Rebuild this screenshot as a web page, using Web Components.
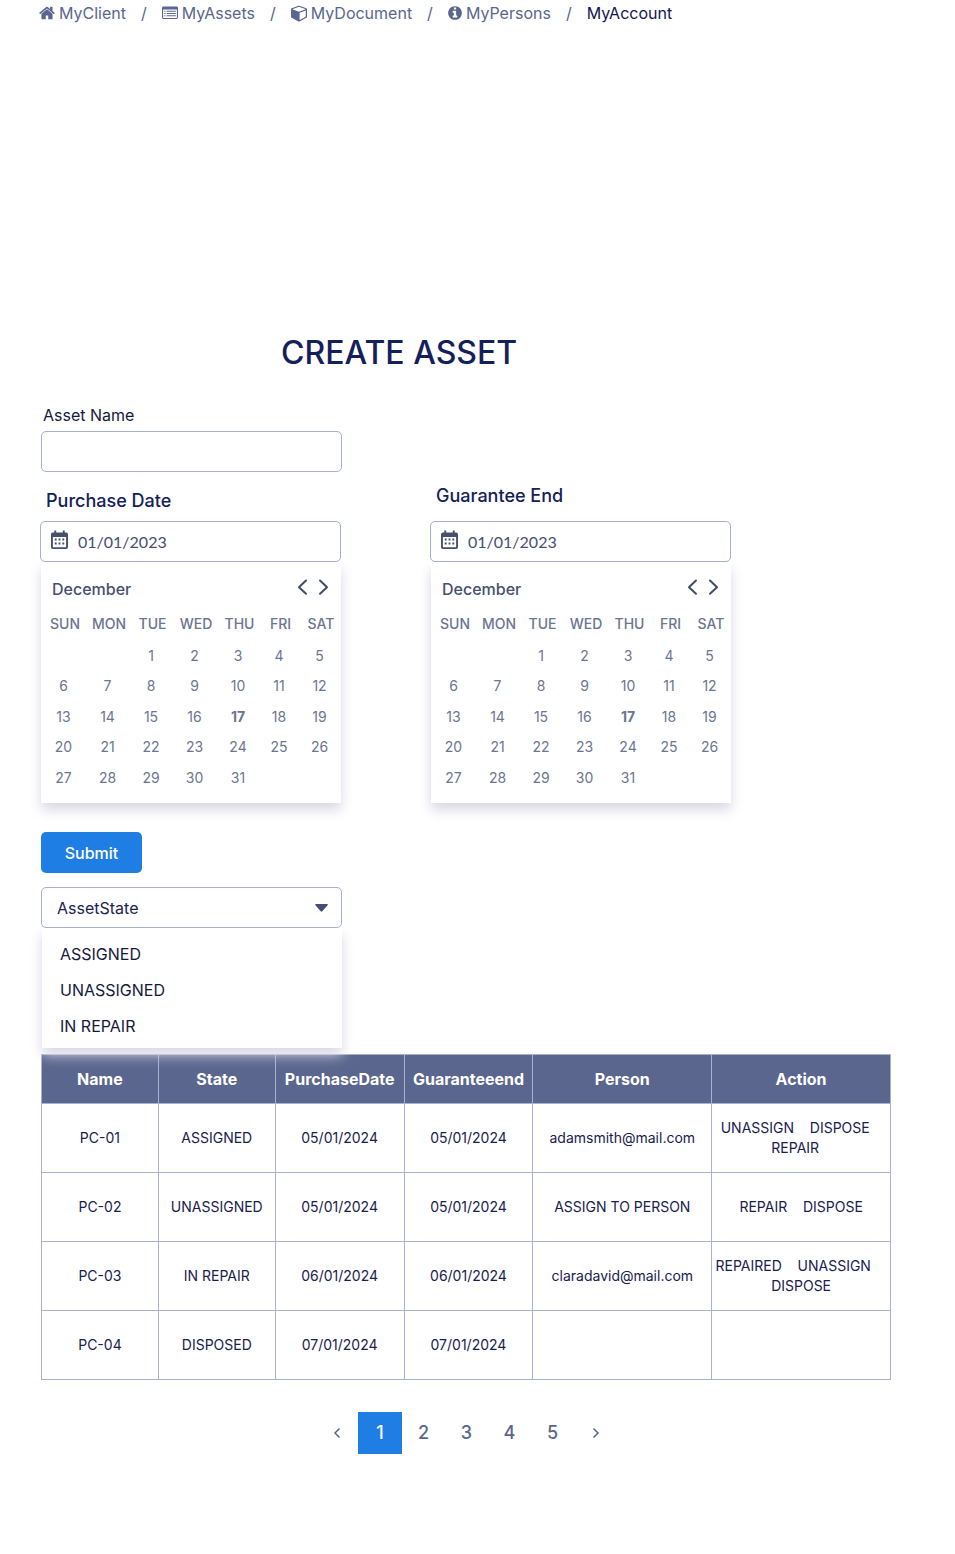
<!DOCTYPE html>
<html lang="en">
<head>
<meta charset="utf-8">
<meta name="viewport" content="width=device-width, initial-scale=1">
<title>Create Asset</title>
<style>
  body { margin: 0; background: #fff; color: #19204f; font: 16px/24px Inter, "Liberation Sans", sans-serif; }
</style>
</head>
<body>
<asset-page>
  <crumb-trail slot="nav">
    <crumb-link icon="home">MyClient</crumb-link>
    <crumb-link icon="list">MyAssets</crumb-link>
    <crumb-link icon="cube">MyDocument</crumb-link>
    <crumb-link icon="info">MyPersons</crumb-link>
    <crumb-link current>MyAccount</crumb-link>
  </crumb-trail>
  <span slot="title">CREATE ASSET</span>
  <text-field>Asset Name</text-field>
  <date-row>
    <date-field>Purchase Date</date-field>
    <date-field raised>Guarantee End</date-field>
  </date-row>
  <submit-button>Submit</submit-button>
  <state-select></state-select>
  <asset-table></asset-table>
  <page-nav></page-nav>
</asset-page>

<script>
const define = (name, html, setup) => {
  const template = document.createElement('template');
  template.innerHTML = html;
  customElements.define(name, class extends HTMLElement {
    connectedCallback() {
      if (this.shadowRoot) return;
      this.attachShadow({ mode: 'open' }).append(template.content.cloneNode(true));
      if (setup) setup(this, this.shadowRoot);
    }
  });
};

const icons = {
  home: `<svg width="16" height="18" viewBox="64 0 1664 1792"><path d="M1472 992v480q0 26-19 45t-45 19h-384v-384h-256v384h-384q-26 0-45-19t-19-45v-480q0-1 .5-3t.5-3l575-474 575 474q1 2 1 6zm223-69l-62 74q-8 9-21 11h-3q-13 0-21-7l-692-577-692 577q-12 8-24 7-13-2-21-11l-62-74q-8-10-7-23.5t11-21.5l719-599q32-26 76-26t76 26l244 204v-195q0-14 9-23t23-9h192q14 0 23 9t9 23v408l219 182q10 8 11 21.5t-7 23.5z"/></svg>`,
  list: `<svg width="16" height="16" viewBox="0 0 16 16"><path fill-rule="evenodd" d="M1.400 1.500h13.200A1.400 1.400 0 0 1 16 2.900v9.700a1.400 1.400 0 0 1-1.400 1.400H1.400A1.400 1.400 0 0 1 0 12.600V2.900a1.400 1.400 0 0 1 1.400-1.400zM1.100 4.500v8q0 .4.4.4h13q.4 0 .4-.4v-8zM2.300 5.700h1.200v1H2.300zM4.600 5.700h9.100v1H4.600zM2.300 8h1.200v1H2.300zM4.600 8h9.100v1H4.600zM2.300 10.300h1.200v1H2.300zM4.600 10.300h9.100v1H4.600z"/></svg>`,
  cube: `<svg width="16" height="18" viewBox="0 0 1664 1792"><path d="M896 1629l640-349v-636l-640 233v752zm-64-865l698-254-698-254-698 254zm832-252v768q0 35-18 65t-49 47l-704 384q-28 16-61 16t-61-16l-704-384q-31-17-49-47t-18-65v-768q0-40 23-73t61-47l704-256q22-8 44-8t44 8l704 256q38 14 61 47t23 73z"/></svg>`,
  info: `<svg width="14" height="16" viewBox="128 0 1536 1792"><path d="M1152 1376v-160q0-14-9-23t-23-9h-96v-512q0-14-9-23t-23-9h-320q-14 0-23 9t-9 23v160q0 14 9 23t23 9h96v320h-96q-14 0-23 9t-9 23v160q0 14 9 23t23 9h448q14 0 23-9t9-23zm-128-896v-160q0-14-9-23t-23-9h-192q-14 0-23 9t-9 23v160q0 14 9 23t23 9h192q14 0 23-9t9-23zm640 416q0 209-103 385.500t-279.500 279.500-385.500 103-385.500-103-279.500-279.500-103-385.500 103-385.500 279.500-279.500 385.500-103 385.500 103 279.500 279.500 103 385.500z"/></svg>`
};

define('asset-page', `
<style>
  :host { display: block; padding: 0 64px 100px 41px; }
  main { display: flex; flex-direction: column; }
  h1 { margin: 308px 0 30px; padding-left: 240px; font-size: 32px; line-height: 40px; font-weight: 500; color: #14205a; }
</style>
<slot name="nav"></slot>
<main><h1><slot name="title"></slot></h1><slot></slot></main>`);

define('crumb-trail', `
<style>
  :host { display: block; }
  nav { display: flex; flex-wrap: wrap; padding-top: 1px; margin-left: -2px; }
</style>
<nav aria-label="Breadcrumb"><slot></slot></nav>`);

define('crumb-link', `
<style>
  :host { display: flex; color: #5a668e; line-height: 24px; }
  a { display: flex; align-items: center; gap: 4px; color: inherit; text-decoration: none; }
  svg { fill: currentColor; flex: none; }
  :host([current]) a { color: #14164f; }
  .slash { padding: 0 15px; }
  :host([current]) .slash { display: none; }
</style>
<a href="#"><slot></slot></a><span class="slash">/</span>`, (host, root) => {
  const name = host.getAttribute('icon');
  if (name) root.querySelector('a').insertAdjacentHTML('afterbegin', icons[name]);
});

define('text-field', `
<style>
  :host { display: block; }
  label { display: block; padding: 0 2px; margin-bottom: 4px; color: #15193c; }
  input { display: block; box-sizing: border-box; width: 100%; max-width: 301px; height: 41px; padding: 0 12px; border: 1px solid #a5afcf; border-radius: 5px; font: inherit; color: inherit; }
</style>
<label for="name"><slot></slot></label><input id="name" type="text">`);

define('date-row', `
<style>
  :host { display: grid; grid-template-columns: repeat(2, minmax(0, 300px)); gap: 90px; align-items: end; margin: 12px 0 29px; }
</style>
<slot></slot>`);

define('date-field', `
<style>
  :host { display: block; }
  label { display: block; padding-left: 5px; margin-bottom: 8px; font-size: 18px; font-weight: 500; color: #14205a; }
  :host([raised]) label { margin-bottom: 13px; }
  .field { display: flex; align-items: center; gap: 10px; box-sizing: border-box; height: 41px; margin-left: -1px; padding: 0 10px; border: 1px solid #a5afcf; border-radius: 5px; background: #fff; position: relative; z-index: 1; }
  .field svg { flex: none; margin-bottom: 3px; }
  input { flex: 1; min-width: 0; padding: 0; border: 0; outline: 0; background: none; font: 16px/24px Lato, sans-serif; color: #474f70; }
  .panel { box-sizing: border-box; height: 241px; padding-top: 15px; background: #fff; box-shadow: 0 7px 12px #d9d7e6; }
  header { display: flex; align-items: center; padding: 0 12px 0 11px; color: #474f70; }
  h2 { flex: 1; margin: 0; font-size: 16px; line-height: 24px; font-weight: 500; }
  button { display: block; padding: 0; border: 0; background: none; height: 20px; margin-bottom: 4px; }
  button + button { margin-left: 10px; }
  button svg { display: block; fill: none; stroke: #414a70; stroke-width: 2; stroke-linecap: round; stroke-linejoin: round; }
  table { width: 100%; margin-top: 7px; table-layout: fixed; border-collapse: collapse; font-size: 14px; line-height: 20px; color: #6c7591; text-align: center; }
  th { height: 32px; padding: 0 0 0 3px; font-weight: 500; }
  td { height: 30px; padding: 0; }
  tr:nth-child(odd) td { height: 31px; }
</style>
<label for="date"><slot></slot></label>
<div class="field">
  <svg width="17" height="20" viewBox="0 0 18 20" preserveAspectRatio="none"><path fill="#474f70" fill-rule="evenodd" d="M3.500.5h2v2h7v-2h2v2H16a2 2 0 0 1 2 2V17a2 2 0 0 1-2 2H2a2 2 0 0 1-2-2V4.500a2 2 0 0 1 2-2h1.500zM2 7v9.700q0 .6.600.600h12.800q.6 0 .6-.600V7zM4 8.500h2v2H4zM8 8.500h2v2H8zM12 8.500h2v2h-2zM4 12.500h2v2H4zM8 12.500h2v2H8zM12 12.500h2v2h-2z"/></svg>
  <input id="date" type="text" value="01/01/2023">
</div>
<div class="panel">
  <header>
    <h2>December</h2>
    <button type="button" aria-label="Previous month"><svg width="11" height="20" viewBox="0 0 11 20"><path d="M9 3.500 2 10.300l7 6.500"/></svg></button>
    <button type="button" aria-label="Next month"><svg width="11" height="20" viewBox="0 0 11 20"><path d="m2 3.500 7 6.800-7 6.500"/></svg></button>
  </header>
  <table>
    <colgroup></colgroup>
    <thead><tr><th>SUN</th><th>MON</th><th>TUE</th><th>WED</th><th>THU</th><th>FRI</th><th>SAT</th></tr></thead>
    <tbody></tbody>
  </table>
</div>`, (host, root) => {
  root.querySelector('colgroup').innerHTML = [45, 43, 44, 43, 44, 38, 43].map(w => `<col style="width:${w}px">`).join('');
  let rows = '';
  for (let week = 0; week < 5; week++) {
    rows += '<tr>';
    for (let day = 0; day < 7; day++) {
      const n = week * 7 + day - 1;
      rows += `<td>${n < 1 || n > 31 ? '' : n === 17 ? '<b>17</b>' : n}</td>`;
    }
    rows += '</tr>';
  }
  root.querySelector('tbody').innerHTML = rows;
});

define('submit-button', `
<style>
  :host { display: block; }
  button { min-width: 101px; height: 41px; display: block; padding: 0 16px; border: 0; border-radius: 5px; background: #1f7ee4; color: #fff; font: 500 16px/24px Inter, sans-serif; }
</style>
<button type="submit"><slot></slot></button>`);

define('state-select', `
<style>
  :host { display: block; margin: 14px 0 6px; max-width: 301px; position: relative; z-index: 1; }
  .box { display: grid; align-items: center; position: relative; z-index: 1; }
  .box > * { grid-area: 1 / 1; }
  select { appearance: none; width: 100%; height: 41px; padding: 0 40px 0 15px; border: 1px solid #a5afcf; border-radius: 5px; background: #fff; font: inherit; color: #1c2250; }
  svg { justify-self: end; margin-right: 14px; pointer-events: none; }
  ul { list-style: none; margin: 0 0 0 1px; padding: 8px 0 4px; background: #fff; box-shadow: 0 7px 12px #d9d7e6; }
  li { padding: 6px 18px; color: #15193c; }
</style>
<div class="box">
  <select aria-label="Asset state"><option>AssetState</option></select>
  <svg width="13" height="8" viewBox="0 0 13 8"><path fill="#474f70" d="M1 0h11q1.300.2.600 1.300L7.300 7.200q-.8.900-1.600 0L.4 1.300Q-.3.200 1 0z"/></svg>
</div>
<ul role="listbox" aria-label="Asset state options">
  <li role="option">ASSIGNED</li><li role="option">UNASSIGNED</li><li role="option">IN REPAIR</li>
</ul>`);

define('asset-table', `
<style>
  :host { display: block; }
  table { width: 100%; table-layout: fixed; border-collapse: collapse; font-size: 14px; line-height: 20px; text-align: center; color: #19204f; }
  th, td { border: 1px solid #a9b1cf; padding: 0; box-sizing: border-box; }
  th { height: 49px; background: #5a668d; color: #fff; font-size: 16px; font-weight: 700; }
  td { height: 69px; }
  .actions { white-space: pre; }
  button { padding: 0; border: 0; background: none; font: inherit; color: inherit; }
</style>
<table>
  <colgroup></colgroup>
  <thead><tr><th>Name</th><th>State</th><th>PurchaseDate</th><th>Guaranteeend</th><th>Person</th><th>Action</th></tr></thead>
  <tbody></tbody>
</table>`, (host, root) => {
  root.querySelector('colgroup').innerHTML = [117, 117, 129, 129, 179, 179].map(w => `<col style="width:${w / 8.5}%">`).join('');
  // Runs of spaces in the last column separate the actions; the cell keeps them.
  const rows = [
    ['PC-01', 'ASSIGNED', '05/01/2024', '05/01/2024', 'adamsmith@mail.com', 'UNASSIGN    DISPOSE   \nREPAIR   '],
    ['PC-02', 'UNASSIGNED', '05/01/2024', '05/01/2024', 'ASSIGN TO PERSON', 'REPAIR    DISPOSE'],
    ['PC-03', 'IN REPAIR', '06/01/2024', '06/01/2024', 'claradavid@mail.com', 'REPAIRED    UNASSIGN    \nDISPOSE'],
    ['PC-04', 'DISPOSED', '07/01/2024', '07/01/2024', '', '']
  ];
  root.querySelector('tbody').innerHTML = rows.map(row => '<tr>' + row.map((text, i) => i < 5
    ? `<td>${text}</td>`
    : `<td class="actions">${text.replace(/[A-Z]+/g, '<button type="button">$&</button>')}</td>`).join('') + '</tr>').join('');
});

define('page-nav', `
<style>
  :host { display: block; margin-top: 32px; }
  nav { display: flex; justify-content: center; }
  button { display: flex; align-items: center; justify-content: center; width: 43px; height: 42px; padding: 0; border: 0; background: none; color: #5a668e; font: 500 18px/24px Inter, sans-serif; }
  [aria-current] { width: 44px; background: #1f7ee4; color: #fff; }
  svg { fill: none; stroke: currentColor; stroke-width: 1.500; }
</style>
<nav aria-label="Pages">
  <button aria-label="Previous page"><svg width="8" height="12" viewBox="0 0 8 12"><path d="M6.500 1.500 2 6l4.500 4.500"/></svg></button>
  <button aria-current="page">1</button><button>2</button><button>3</button><button>4</button><button>5</button>
  <button aria-label="Next page"><svg width="8" height="12" viewBox="0 0 8 12"><path d="M1.500 1.500 6 6l-4.500 4.500"/></svg></button>
</nav>`);
</script>
</body>
</html>
